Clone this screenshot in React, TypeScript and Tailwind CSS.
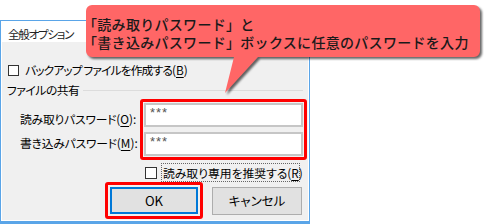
import React from 'react';

const ui = "font-['Noto_Sans_CJK_JP','Liberation_Sans',sans-serif] [font-feature-settings:'palt']";

const Key = ({ k }: { k: string }) => (
  <span className="tracking-normal">
    (<span className="underline underline-offset-2">{k}</span>)
  </span>
);

const CheckBox = ({ size }: { size: string }) => (
  <div className={`${size} shrink-0 border border-[#333] bg-white`} />
);

export default function App() {
  return (
    <div className={`relative w-[500px] h-[224px] overflow-hidden bg-white text-black whitespace-nowrap ${ui}`}>
      {/* Dialog */}
      <div className="mt-[20px] w-[310px] h-[204px] flex flex-col border-t border-x border-b-[3px] border-[#5aa5e8]">
        <div className="h-[21px] shrink-0 bg-white pl-[7px] pt-[5px] text-[11.6px] tracking-[-1.3px] leading-[16px] text-[#222]">
          全般オプション
        </div>

        <div className="flex-1 bg-[#f0f0f0] border-x border-b border-white pl-[5px] pt-[21px] text-[11.8px] tracking-[-0.5px] leading-[14px]">
          {/* Backup checkbox */}
          <div className="h-[14px] flex items-center pl-[1px]">
            <CheckBox size="w-[11px] h-[11px]" />
            <span className="ml-[6px] tracking-[-0.9px]">
              バックアップ ファイルを作成する<Key k="B" />
            </span>
          </div>

          {/* Group label */}
          <div className="mt-[6px] h-[14px] flex items-center pr-[5px]">
            <span>ファイルの共有</span>
            <div className="flex-1 h-px bg-[#dcdcdc] ml-[4px]" />
          </div>

          {/* Password fields */}
          <div className="mt-[2px] flex">
            <div className="w-[133px] pl-[13px] pt-[12px] flex flex-col gap-[8px] tracking-[-0.2px]">
              <div className="h-[16px] leading-[16px]">
                読み取りパスワード<Key k="O" />:
              </div>
              <div className="h-[16px] leading-[16px]">
                書き込みパスワード<Key k="M" />:
              </div>
            </div>
            <div className="w-[167px] border-[3px] border-[#ff0000] rounded-[3px] p-px flex flex-col gap-[5px]">
              <div className="h-[24px] bg-white border-2 border-[#c6c6c6] pl-[4px] pt-[1px] font-['Liberation_Sans',sans-serif] text-[13px] leading-[14px] tracking-[1px] text-[#555]">
                ***
              </div>
              <div className="h-[24px] bg-white border-2 border-[#c6c6c6] pl-[4px] pt-[1px] font-['Liberation_Sans',sans-serif] text-[13px] leading-[14px] tracking-[1px] text-[#555]">
                ***
              </div>
            </div>
          </div>

          {/* Read-only recommended */}
          <div className="mt-[3px] ml-[138px] h-[19px] flex items-center">
            <CheckBox size="w-[12px] h-[12px]" />
            <div className="ml-[4px] h-[19px] w-[139px] border border-dotted border-[#666] pl-[1px] leading-[17px] tracking-normal">
              読み取り専用を推奨する<Key k="R" />
            </div>
          </div>

          {/* Buttons */}
          <div className="flex items-start tracking-normal">
            <div className="ml-[98px] w-[98px] border-[3px] border-[#ff0000] rounded-[3px] p-[2px]">
              <div className="h-[27px] bg-[#e1e1e1] border-2 border-[#0078d7] flex items-center justify-center text-[13px]">
                OK
              </div>
            </div>
            <div className="ml-[9px] mt-[5px] w-[90px] h-[28px] bg-[#e1e1e1] border border-[#adadad] flex items-center justify-center text-[12.5px]">
              キャンセル
            </div>
          </div>
        </div>
      </div>

      {/* Callout */}
      <div className="absolute left-[86px] top-[5px] w-[394px] h-[90px]">
        <svg
          className="absolute inset-0 drop-shadow-[2px_2px_1px_rgba(0,0,0,0.6)]"
          width="394"
          height="90"
          viewBox="0 0 394 90"
        >
          <path
            d="M6,0 H388 A6,6 0 0 1 394,6 V46 A6,6 0 0 1 388,52 H172 L139,88 L148,52 H6 A6,6 0 0 1 0,46 V6 A6,6 0 0 1 6,0 Z"
            fill="#ff6666"
          />
        </svg>
        <div className="relative ml-[-3px] pt-[10px] font-['Noto_Sans_CJK_JP',sans-serif] font-medium text-[14px] tracking-[0.3px] leading-[18px] text-[#1a1a1a] [font-feature-settings:normal]">
          <div>「読み取りパスワード」と</div>
          <div>「書き込みパスワード」ボックスに任意のパスワードを入力</div>
        </div>
      </div>
    </div>
  );
}
